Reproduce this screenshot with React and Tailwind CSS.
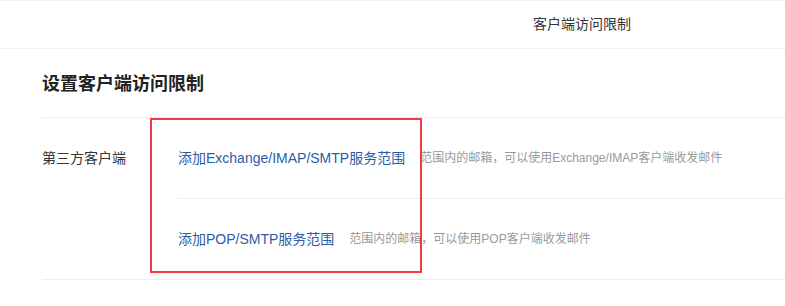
import React from 'react';

const font = { fontFamily: '"Liberation Sans", "Noto Sans CJK SC", sans-serif' };

const items = [
  { link: '添加Exchange/IMAP/SMTP服务范围', desc: '范围内的邮箱，可以使用Exchange/IMAP客户端收发邮件' },
  { link: '添加POP/SMTP服务范围', desc: '范围内的邮箱，可以使用POP客户端收发邮件' },
];

export default function App() {
  return (
    <div className="w-[785px] h-[306px] bg-white overflow-hidden" style={font}>
      <div className="h-[49px] border-t border-t-[#edf1f7] border-b border-b-[#f0f0f0] flex items-center pl-[533px]">
        <span className="text-[14px] text-[#333]">客户端访问限制</span>
      </div>

      <div className="relative pl-[42px]">
        <div className="h-[69px] flex items-center border-b border-[#eeeeee]">
          <h2 className="text-[18px] font-semibold text-[#222] pt-[3px]">设置客户端访问限制</h2>
        </div>

        <div className="flex border-b border-[#eeeeee]">
          <div className="w-[136px] h-[80px] flex items-center text-[14px] text-[#333]">第三方客户端</div>
          <div className="flex-1">
            {items.map((item, i) => (
              <div
                key={item.link}
                className={
                  'h-[80px] flex items-center gap-[15px] ' +
                  (i === 0 ? 'border-b border-[#eeeeee] h-[81px]' : '')
                }
              >
                <a className="text-[14px] text-[#2d5ca6] cursor-pointer">{item.link}</a>
                <span className="text-[12px] text-[#999]">{item.desc}</span>
              </div>
            ))}
          </div>
        </div>

        <div className="absolute left-[150px] top-[69px] w-[272px] h-[155px] border-2 border-[#f23a42] pointer-events-none" />
      </div>
    </div>
  );
}
